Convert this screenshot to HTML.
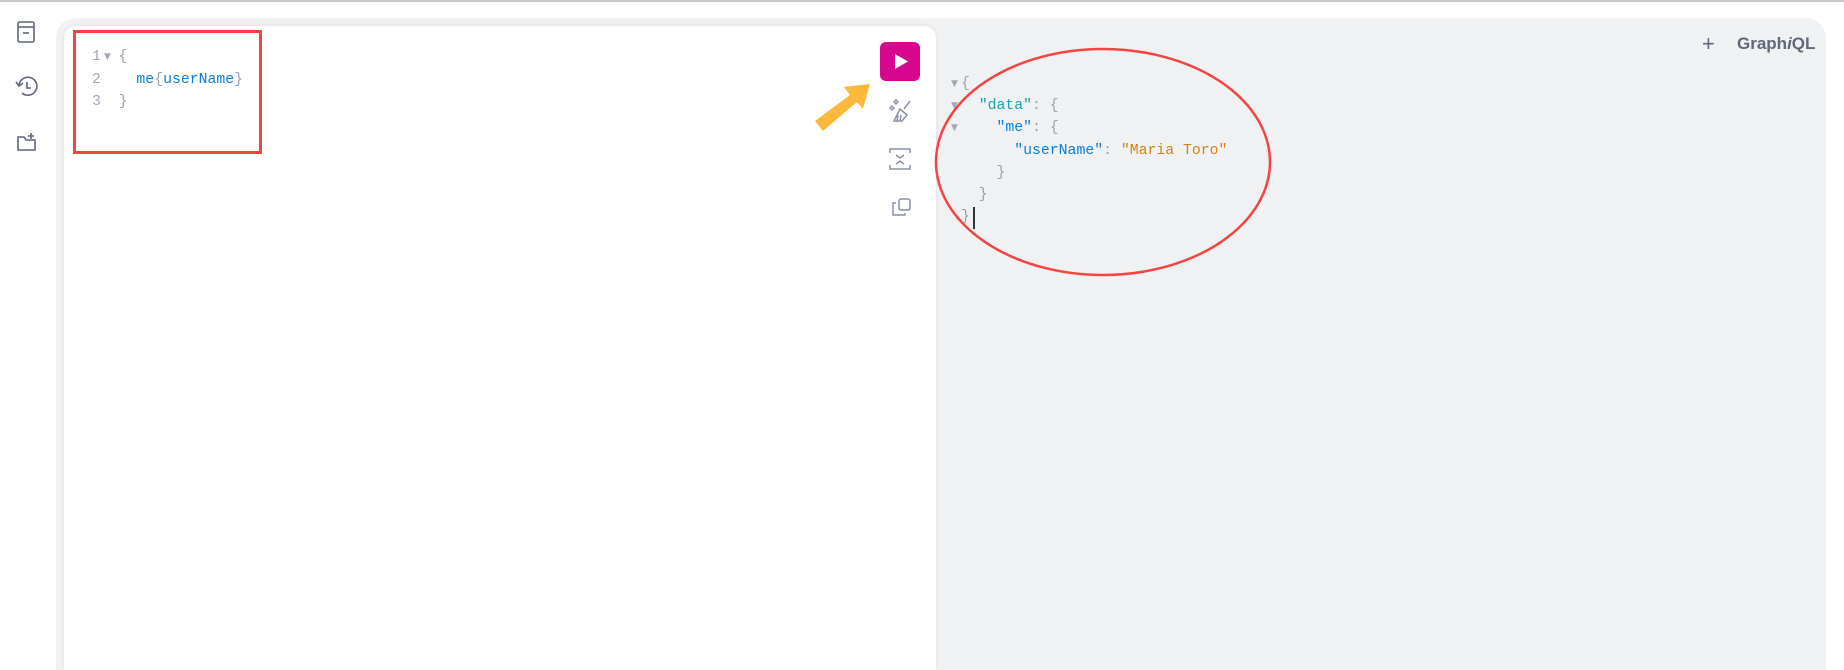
<!DOCTYPE html>
<html style="width:1844px;height:670px;overflow:hidden"><head><style>
*{margin:0;padding:0;box-sizing:border-box}
body{width:1844px;height:670px;background:#fff;position:relative;overflow:hidden;font-family:"Liberation Sans",sans-serif}
.mono{font-family:"Liberation Mono",monospace;font-size:14.8px;position:absolute;white-space:pre;line-height:22.5px}
.p{color:#9aa0ad}.k{color:#0b7fd6}.t{color:#1aa3b8}.s{color:#d4820c}.n{color:#a3a8b4}
.ar{position:absolute;font-size:9px;color:#a3a8b4;font-family:"DejaVu Sans",sans-serif}
</style></head><body>
<div style="position:absolute;left:0;top:0;width:1844px;height:2px;background:#c8c8c8"></div>
<svg style="position:absolute;left:0;top:0" width="56" height="170" fill="none" stroke="#5f6779" stroke-width="1.6">
<rect x="18" y="22" width="16" height="20" rx="1.5"/><line x1="18" y1="27" x2="34" y2="27"/><line x1="23" y1="33" x2="29" y2="33"/>
<path d="M19 85 A9 9 0 1 1 22 93"/><path d="M16 82 L19 86 L23 83"/><path d="M27 82 V88 H31"/>
<path d="M18 137 V150 H35 V140 H26 L24 137 Z"/><path d="M31 133 V139 M28 136 H34"/>
</svg>
<div style="position:absolute;left:56px;top:18px;width:1770px;height:652px;background:#f0f1f3;border-radius:20px 20px 0 0"></div>
<div style="position:absolute;left:64px;top:26px;width:872px;height:644px;background:#fff;border-radius:12px 12px 0 0;box-shadow:0 0 4px rgba(0,0,0,0.08)"></div>
<div class="mono" style="left:92px;top:46px"><span class="n">1</span>  <span class="p">{</span>
<span class="n">2</span>    <span class="k">me</span><span class="p">{</span><span class="k">userName</span><span class="p">}</span>
<span class="n">3</span>  <span class="p">}</span></div>
<div class="ar" style="left:104px;top:52px">▼</div>
<div style="position:absolute;left:73px;top:30px;width:189px;height:124px;border:3px solid #f44444"></div>
<div style="position:absolute;left:880px;top:42px;width:40px;height:39px;background:#d6068f;border-radius:6px"></div>
<svg style="position:absolute;left:880px;top:42px" width="40" height="39"><path d="M15 12 L28 19.5 L15 27 Z" fill="#fff"/></svg>
<svg style="position:absolute;left:880px;top:95px" width="40" height="130" fill="none" stroke="#8b92a3" stroke-width="1.5">
<path d="M10 13 l2 -2 l2 2 l-2 2 z M14 7 l2 -2 l2 2 l-2 2 z"/><path d="M30 6 L24 14 M20 14 L27 20 L22 26 L14 26 Z M18 20 L17 26 M21 20 L20 26"/>
<path d="M10 58 V54 H30 V58 M10 70 V74 H30 V70 M16 60 L20 63 L24 60 M16 69 L20 66 L24 69"/>
<rect x="19" y="104" width="11" height="11" rx="2"/><path d="M16 108 H13 V120 H25 V118"/>
</svg>
<svg style="position:absolute;left:800px;top:75px" width="80" height="60"><path d="M15 46 L50 20 L44 12 L70 9 L63 34 L57 27 L23 56 Z" fill="#fcb83a"/></svg>
<div style="position:absolute;left:1702px;top:31px;font-size:22px;color:#5f6779">+</div>
<div style="position:absolute;left:1737px;top:34px;font-size:17px;color:#5f6779;font-weight:bold">Graph<i>i</i>QL</div>
<div class="mono" style="left:961px;top:73px;line-height:22.2px"><span class="p">{</span>
  <span class="t">"data"</span><span class="p">: {</span>
    <span class="k">"me"</span><span class="p">: {</span>
      <span class="k">"userName"</span><span class="p">: </span><span class="s">"Maria Toro"</span>
    <span class="p">}</span>
  <span class="p">}</span>
<span class="p">}</span></div>
<div class="ar" style="left:951px;top:79px">▼</div>
<div class="ar" style="left:951px;top:101px">▼</div>
<div class="ar" style="left:951px;top:123px">▼</div>
<div style="position:absolute;left:973px;top:207px;width:2px;height:22px;background:#333"></div>
<svg style="position:absolute;left:930px;top:45px" width="350" height="240"><ellipse cx="173" cy="117" rx="167" ry="113" fill="none" stroke="#f44444" stroke-width="2.5"/></svg>
</body></html>
